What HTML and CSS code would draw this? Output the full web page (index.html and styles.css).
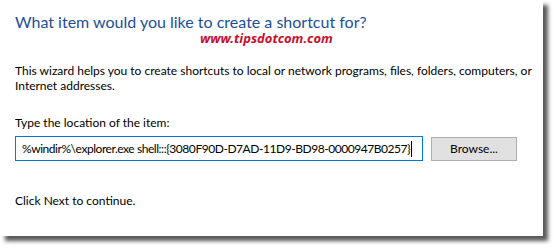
FILE: index.html
```html
<!DOCTYPE html>
<html>
<head>
<meta charset="utf-8">
<link rel="stylesheet" href="styles.css">
</head>
<body>
<div class="panel">
  <h1 class="title">What item would you like to create a shortcut for?</h1>
  <div class="mark">www.tipsdotcom.com</div>
  <p class="desc">This wizard helps you to create shortcuts to local or network programs, files, folders, computers, or Internet addresses.</p>
  <div class="label">Type the location of the item:</div>
  <div class="row">
    <div class="input">%windir%\explorer.exe shell:::{3080F90D-D7AD-11D9-BD98-0000947B0257}<span class="caret"></span></div>
    <div class="btn">Browse...</div>
  </div>
  <div class="next">Click Next to continue.</div>
</div>
</body>
</html>
```
FILE: styles.css
```css
html, body { margin: 0; padding: 0; background: #fff; }
body { width: 558px; height: 252px; overflow: hidden; font-family: Lato, "Noto Sans", sans-serif; color: #000; }
.panel {
  width: 543px; height: 236px; box-sizing: border-box;
  background: #fff;
  box-shadow: 5px 5px 4px rgba(0,0,0,0.65);
  padding: 12px 0 0 15px;
  display: flex; flex-direction: column;
}
.title { margin: 0; font-weight: normal; font-size: 16px; line-height: 20px; color: #1c4f9c; }
.mark { margin: -1px 0 0 185px; font-family: "Noto Sans", sans-serif; font-weight: bold; font-style: italic; font-size: 13px; line-height: 14px; color: #c8102e; }
.desc { margin: 18px 0 0 0; font-size: 12px; line-height: 15px; width: 525px; }
.label { margin-top: 22px; font-size: 12px; line-height: 16px; }
.row { display: flex; align-items: center; gap: 8px; margin-top: 5px; }
.input {
  width: 408px; height: 25px; box-sizing: border-box; border: 1px solid #0078d7;
  font-size: 12px; line-height: 23px; padding-left: 6px; letter-spacing: -0.45px; white-space: nowrap; overflow: hidden;
  display: flex; align-items: center;
}
.caret { display: inline-block; width: 1px; height: 16px; background: #000; margin-left: 1px; }
.btn {
  width: 86px; height: 24px; box-sizing: border-box; border: 1px solid #adadad; background: #e1e1e1;
  font-size: 12px; line-height: 22px; text-align: center;
}
.next { margin-top: 32px; font-size: 12px; line-height: 16px; }
```
